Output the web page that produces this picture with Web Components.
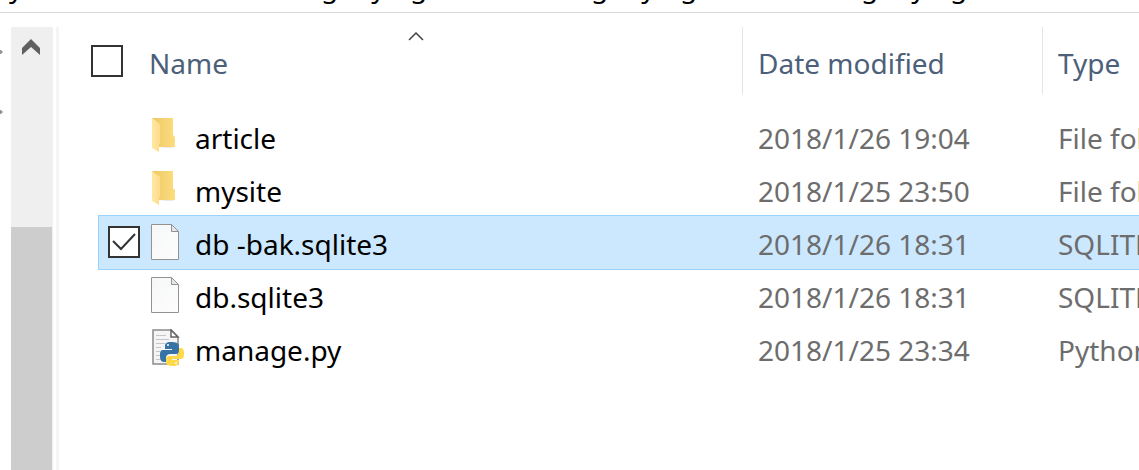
<!DOCTYPE html>
<html lang="en"><head><meta charset="utf-8"><title>File list</title>
<style>
html,body{margin:0;height:100%;background:#fff;overflow:hidden}
body{font:28px/38px "Noto Sans","Open Sans",sans-serif;color:#000}
</style></head><body>
<file-explorer></file-explorer>
<script>
const define = (name, html, init) => customElements.define(name, class extends HTMLElement {
  constructor() {
    super();
    const t = document.createElement('template');
    t.innerHTML = html;
    this.attachShadow({mode: 'open'}).append(t.content.cloneNode(true));
  }
  connectedCallback() { if (init) init(this); }
});

const icons = {
  folder: `<svg width="34" height="36" viewBox="0 0 34 36">
    <defs><linearGradient id="b"><stop offset="0" stop-color="#edc764"/><stop offset="1" stop-color="#fddd80"/></linearGradient>
    <linearGradient id="f"><stop offset="0" stop-color="#ffe8a3"/><stop offset="1" stop-color="#fddc8c"/></linearGradient></defs>
    <path d="M22 28h5l-5 2H9z" fill="#ddd" opacity=".6"/>
    <path d="M2 0h21v17l2 2v10H8z" fill="url(#b)"/>
    <path d="M2 0l8 6v20H9v8l-7-4z" fill="url(#f)"/></svg>`,
  file: `<svg width="34" height="36" viewBox="0 0 34 36">
    <defs><linearGradient id="p" x2="1" y2="1"><stop offset="0" stop-color="#f6f7f8"/><stop offset="1" stop-color="#fdfdfd"/></linearGradient></defs>
    <path d="M1.500.500h20l7 7v28h-27z" fill="url(#p)" stroke="#929292"/>
    <path d="M21.500.500v7h7z" fill="#e7e7e7" stroke="#929292"/></svg>`,
  python: `<svg width="34" height="38" viewBox="0 0 34 38">
    <path d="M3 1h18l7 7v27H3z" fill="#f5f5f5" stroke="#8a8a8a" stroke-width="1.500"/>
    <path d="M21 1v7h7z" fill="#fff" stroke="#666" stroke-width="1.500"/>
    <path d="M6 6.500h10M6 10.500h13M6 14.500h9M6 18.500h5M6 22.500h4M6 26.500h4M6 30.500h8" stroke="#c6c6c6"/>
    <path d="M21 13c-5 0-6 2-6 4v3h7v1H13c-3 0-3 3-3 6s1 6 4 6h2v-4c0-3 2-4 4-4h6c2 0 3-2 3-4v-4c0-3-3-4-8-4z" fill="#3772a4"/>
    <circle cx="18" cy="16" r="1" fill="#fff"/>
    <path d="M23 37c5 0 6-2 6-4v-2h-7v-1h9c3 0 3-3 3-6s-1-5-3-5h-2v3c0 3-2 5-4 5h-6c-2 0-3 2-3 4v2c0 3 3 4 7 4z" fill="#ffd949"/>
    <circle cx="26" cy="34" r="1" fill="#fff"/></svg>`
};

define('tick-box', `<style>
  :host{display:block;width:32px;height:32px}
  input{appearance:none;display:block;box-sizing:border-box;margin:0;width:32px;height:32px;border:2px solid #333;background:#fff}
  label{display:grid}
  input,svg{grid-area:1/1}
  svg{pointer-events:none;display:none}
  input:checked+svg{display:block}
</style><label><input type="checkbox"><svg width="32" height="32" viewBox="0 0 32 32"><path d="M5 15l8 8L27 8" fill="none" stroke="#333" stroke-width="2"/></svg></label>`,
el => {
  const i = el.shadowRoot.querySelector('input');
  i.checked = el.hasAttribute('checked');
  i.setAttribute('aria-label', el.getAttribute('label'));
});

define('path-bar', `<style>
  :host{display:grid;grid-template-columns:312px 270px 270px 1fr;align-items:end;align-content:end;height:5px;padding:0 0 7px 9px;overflow:hidden;border-bottom:1px solid #d9d9d9}
  ::slotted(a){color:inherit;text-decoration:none}
</style><slot></slot>`);

define('nav-edge', `<style>
  :host{display:block;width:11px;flex:none;padding-top:20px}
  svg{display:block}
</style><svg width="11" height="74" viewBox="0 0 11 74"><path d="M0 3h1l2 2-2 2H0zM0 63h1l2 2-2 2H0z" fill="#8c969c"/></svg>`);

define('scroll-rail', `<style>
  :host{display:flex;flex-direction:column;width:42px;flex:none;background:#efefef;margin-right:3px}
  button{display:flex;border:0;padding:12px 0 0 11px;background:none;height:200px;box-sizing:border-box}
  div{flex:1;background:#cdcdcd;margin-right:1px}
</style><button aria-label="Scroll up"><svg width="18" height="16" viewBox="0 0 18 16"><path d="M0 9l9-9 9 9v7L9 8l-9 8z" fill="#606060"/></svg></button><div></div>`);

define('file-icon', `<style>:host{display:block}svg{display:block}</style>`,
  el => { el.shadowRoot.innerHTML += icons[el.getAttribute('kind')]; });

define('file-table', `<style>
  :host{display:block;flex:1;min-width:0;overflow:hidden;padding-left:39px}
  table{border-collapse:separate;border-spacing:0;table-layout:fixed;width:100%;min-width:1184px}
  th,td{padding:0;box-sizing:border-box;text-align:left;font-weight:400;vertical-align:middle;white-space:nowrap}
  th{height:67px;padding-top:4px;color:#4c607a}
  th+th{border-left:1px solid #e5e5e5;padding-left:15px}
  tbody td{height:53px;padding-top:2px;color:#6d6d6d}
  tbody td+td{padding-left:16px}
  tbody .gap td{height:16px;padding:0}
  .on td{background:#cce8ff;box-shadow:0 -1px #99d1ff,0 1px #99d1ff}
  .on td:first-child{box-shadow:0 -1px #99d1ff,0 1px #99d1ff,inset 1px 0 #99d1ff}
  .name{display:flex;align-items:center;color:#000}
  .name file-icon{width:34px;margin:-4px 11px 0 0}
  .name tick-box{margin:-4px 10px 0 10px}
  .name .blank{width:52px}
  .head{display:flex;align-items:center;position:relative}
  .head tick-box{margin:-4px 26px 0 -7px}
  .sort{position:absolute;left:310px;top:-12px}
</style><table>
<colgroup><col style="width:644px"><col style="width:300px"><col></colgroup>
<thead><tr><th scope="col"><div class="head"><tick-box label="Select all"></tick-box>Name<svg class="sort" width="16" height="9" viewBox="0 0 16 9"><path d="M1 8l7-7 7 7" fill="none" stroke="#444" stroke-width="1.500"/></svg></div></th><th scope="col">Date modified</th><th scope="col">Type</th></tr></thead>
<tbody></tbody></table>`,
el => {
  const rows = [
    ['folder', 'article', '2018/1/26 19:04', 'File folder'],
    ['folder', 'mysite', '2018/1/25 23:50', 'File folder'],
    ['file', 'db -bak.sqlite3', '2018/1/26 18:31', 'SQLITE3 File', true],
    ['file', 'db.sqlite3', '2018/1/26 18:31', 'SQLITE3 File'],
    ['python', 'manage.py', '2018/1/25 23:34', 'Python File']
  ];
  el.shadowRoot.querySelector('tbody').innerHTML = '<tr class="gap"><td colspan="3"></td></tr>' + rows.map(([k, n, d, t, on]) =>
    `<tr class="${on ? 'on' : ''}"><td><div class="name">${on ? `<tick-box checked label="${n}"></tick-box>` : '<span class="blank"></span>'}<file-icon kind="${k}"></file-icon>${n}</div></td><td>${d}</td><td>${t}</td></tr>`).join('');
});

define('file-explorer', `<style>
  :host{display:flex;flex-direction:column;height:100vh}
  main{display:flex;flex:1;min-height:0;padding-top:14px}
  .rule{width:3px;flex:none;background:#f5f5f5}
</style><path-bar><a href="#">y</a><a href="#">ganying</a><a href="#">ganying</a><a href="#">ganying</a></path-bar><main><nav-edge></nav-edge><scroll-rail></scroll-rail><div class="rule"></div><file-table></file-table></main>`);
</script></body></html>
